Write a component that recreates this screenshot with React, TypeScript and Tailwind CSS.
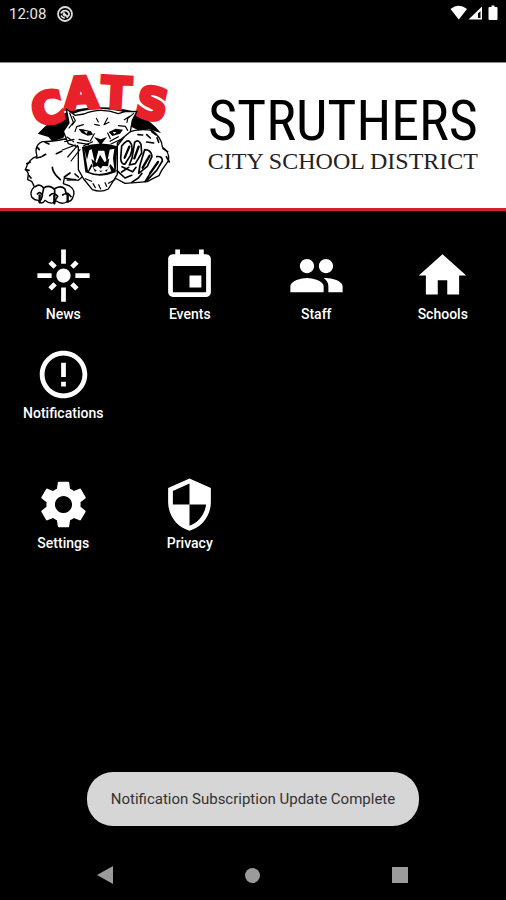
import type { ComponentType } from "react";
import { MdErrorOutline, MdEvent, MdFlare, MdHome, MdPeople, MdSecurity, MdSettings } from "react-icons/md";

type Tile = { label: string; icon: ComponentType<{ className?: string }> };

const mainTiles: Tile[] = [
  { label: "News", icon: MdFlare },
  { label: "Events", icon: MdEvent },
  { label: "Staff", icon: MdPeople },
  { label: "Schools", icon: MdHome },
  { label: "Notifications", icon: MdErrorOutline },
];

const utilityTiles: Tile[] = [
  { label: "Settings", icon: MdSettings },
  { label: "Privacy", icon: MdSecurity },
];

function StatusBar() {
  return (
    <header className="flex h-[62px] items-start justify-between pt-1 pr-[7px] pl-[9px]">
      <div className="flex h-5 items-center gap-[11px]">
        <span className="text-[15px] leading-5 text-[#e6e6e6]">12:08</span>
        <svg viewBox="0 0 16 16" className="size-4" fill="none" stroke="#dedede" aria-hidden="true">
          <circle cx="8" cy="8" r="7" strokeWidth="1.8" />
          <path d="M4 7.500a4.200 4.200 0 0 1 8 0v1.500l-1.600 1.600" strokeWidth="1.800" />
          <path d="M4.200 9.400a4 4 0 0 0 3.600 2.600" strokeWidth="1.500" />
          <path d="M6.200 6.400 10.800 11.600M6 8.200l2 2" strokeWidth="1.800" />
        </svg>
      </div>
      <svg viewBox="0 0 49 20" className="h-5 w-[49px]" fill="#fff" aria-hidden="true">
        <path d="M0.500 5Q8.500-1.500 17 5L8.800 15.500Z" />
        <path fillRule="evenodd" d="M32 2.500V15.500H18.500ZM30.500 7V14H28V9.500Z" />
        <path d="M41.500 1.500h3v1.500h2q1 0 1 1v11q0 1-1 1h-7q-1 0-1-1v-11q0-1 1-1h2Z" />
      </svg>
    </header>
  );
}

function WildcatLogo() {
  return (
    <svg
      viewBox="0 0 510 444"
      className="h-[148px] w-[170px] shrink-0"
      role="img"
      aria-label="Cats"
      strokeLinecap="round"
      strokeLinejoin="round"
    >
      {/* dark dome behind the head */}
      <path d="M68 212Q105 172 160 145Q255 120 355 145Q405 170 438 210L425 206 400 198 375 204 345 190 340 152Q255 124 175 152L145 225 112 235 100 222Z" fill="#000" />
      <text
        x="62 151 258 357"
        y="190 138 133 157"
        rotate="-13 -3 3 12"
        fill="#e8212b"
        stroke="#e8212b"
        strokeWidth="13"
        strokeLinejoin="miter"
        className="font-[DejaVu_Sans,sans-serif] text-[128px] font-bold"
      >
        CATS
      </text>
      <g fill="#fff" stroke="#000" strokeWidth="4">
        {/* left arm and paw */}
        <path d="M150 228Q112 236 82 236Q62 245 63 265L66 280Q42 286 32 318L40 332 38 350 50 355 58 371Q43 386 50 402Q58 412 70 412Q80 428 90 412Q108 428 124 414Q140 426 154 417Q170 416 174 402Q183 382 164 369L145 362 148 345 190 352 250 300 210 230Z" />
        {/* right arm */}
        <path d="M338 208Q370 196 410 202Q440 222 442 252Q464 266 461 292L440 322 432 338Q410 348 397 356L370 358 330 361 300 345 306 250Z" />
        {/* head */}
        <path d="M154 138 180 157 207 153Q255 132 310 152L330 146 366 145 352 172 346 206 322 226 307 240 307 334 280 378Q258 390 232 380L206 348 190 320 190 252 160 242 145 205 162 180Z" />
      </g>
      {/* open mouth */}
      <path d="M201 252Q255 232 307 250L302 328Q255 348 211 328Z" fill="#000" />
      <path d="M208 258 216 290 223 261 230 259 240 302 250 263 268 263 276 300 284 260 298 257 294 286 298 318 286 303 278 319Q258 328 239 319L229 302 219 324Z" fill="#fff" />
      <path d="M229 287 245 300 255 275 269 298 283 286 279 310 263 309 257 317 248 309 235 313Z" fill="#000" />
      <path d="M222 327 232 309 240 327 249 317 257 328 268 318 274 327 283 310 289 325Q255 340 222 327Z" fill="#fff" />
      {/* nose and eyes */}
      <path d="M237 222 257 229 276 222 266 235 257 247 248 235Z" fill="#000" />
      <path d="M191 198 204 199 228 205 234 215 218 218 200 210ZM281 207 302 197 324 200 315 212 292 219Z" fill="#000" />
      <path d="M207 205h11l-3 7ZM293 207h11l-6 6Z" fill="#fff" />
      <g fill="none" stroke="#000" strokeWidth="3.500">
        <path d="M164 150 175 178 162 195M174 160 181 173 172 186M356 151 338 167 336 178M344 160 328 170M244 166 250 177M278 165 267 185 282 178M239 184 253 187M205 185 185 191 180 206M310 188 331 190 338 202M238 212 226 234M278 210 286 227M222 235 192 229M221 244 187 239M233 236 205 249M285 235 310 221M288 243 318 229M188 247 158 282M181 246 142 261M195 260 168 294M156 222 176 236M149 236 177 229M300 350 280 361M211 347 230 355M234 362 241 374M251 365 257 378M270 359 275 370" />
        {/* left arm fur */}
        <path d="M90 238 102 243M67 253 73 260M64 285 78 282M35 302 46 297M31 320 42 322M42 338 48 345M112 313Q113 326 126 340M126 340 136 350M148 342 165 330M157 351 181 350M180 333 190 342M82 280 92 274M124 272 140 265" strokeWidth="5" />
        {/* left paw toes */}
        <path d="M61 371Q75 360 86 376L82 394M87 374Q105 364 119 380L119 397M121 376Q139 366 150 378L154 394M67 393Q76 383 82 398L78 410M104 398Q117 384 128 400L118 416M143 396Q157 385 168 401" strokeWidth="5" />
        <path d="M74 397V418M118 397V421M158 392V416" strokeWidth="7" />
        {/* right paw claws */}
        <path d="M320 249Q336 228 344 236Q357 250 346 278L330 303Q319 306 317 286ZM359 238Q370 227 378 244L380 270 361 302 343 306 351 285ZM389 260Q408 260 411 280L397 310 371 331 375 306ZM425 281Q442 278 442 294L425 322 395 353M444 257 458 266M454 281 463 297M306 323 330 345 350 337M321 311 353 326 363 313M350 358 370 345 381 331M390 356 405 332M320 327 341 313M395 215 406 225M410 206 422 215M426 224 431 238M395 237 416 240M369 215 383 216" strokeWidth="5" />
        <path d="M329 284 343 251M358 286 371 251M383 314 404 278M405 331 429 297" strokeWidth="7" />
      </g>
    </svg>
  );
}

function Banner() {
  return (
    <section className="flex h-[149px] items-start justify-between border-t border-b-3 border-t-[#888] border-b-[#cf202d] bg-white pr-7 pl-[15px] text-black">
      <WildcatLogo />
      <h1 className="flex flex-col items-center pt-7 whitespace-nowrap">
        <span className="font-['Liberation_Sans_Narrow','Roboto_Condensed',Roboto,sans-serif] text-[56px] leading-[60px]">STRUTHERS</span>
        <span className="font-['Liberation_Serif',serif] text-2xl leading-5 text-[#222]">CITY SCHOOL DISTRICT</span>
      </h1>
    </section>
  );
}

function TileGrid({ tiles }: { tiles: Tile[] }) {
  return (
    <div className="grid grid-cols-4 gap-y-[22px]">
      {tiles.map(({ label, icon: Icon }) => (
        <button key={label} type="button" className="flex flex-col items-center">
          <Icon className="size-[57px]" />
          <span className="text-sm leading-5 font-medium">{label}</span>
        </button>
      ))}
    </div>
  );
}

function SystemNav() {
  return (
    <nav className="grid h-[50px] grid-cols-3 px-8">
      <button type="button" aria-label="Back" className="flex items-center justify-center">
        <svg viewBox="0 0 18 18" className="size-[18px]" fill="#9b9b9b"><path d="M0 9 16 0V18Z" /></svg>
      </button>
      <button type="button" aria-label="Home" className="flex items-center justify-center">
        <span className="size-[15px] rounded-full bg-[#9b9b9b]" />
      </button>
      <button type="button" aria-label="Recent apps" className="flex items-center justify-center">
        <span className="size-4 bg-[#9b9b9b]" />
      </button>
    </nav>
  );
}

export default function App() {
  return (
    <div className="flex min-h-screen flex-col bg-black font-[Roboto,sans-serif] text-white">
      <StatusBar />
      <Banner />
      <main className="flex flex-col gap-[53px] pt-9">
        <TileGrid tiles={mainTiles} />
        <TileGrid tiles={utilityTiles} />
      </main>
      <div role="status" className="mx-auto mt-auto mb-6 flex h-[54px] items-center rounded-[26px] bg-[#d6d6d6] px-6 text-[15px] leading-5 text-[#333]">
        Notification Subscription Update Complete
      </div>
      <SystemNav />
    </div>
  );
}
